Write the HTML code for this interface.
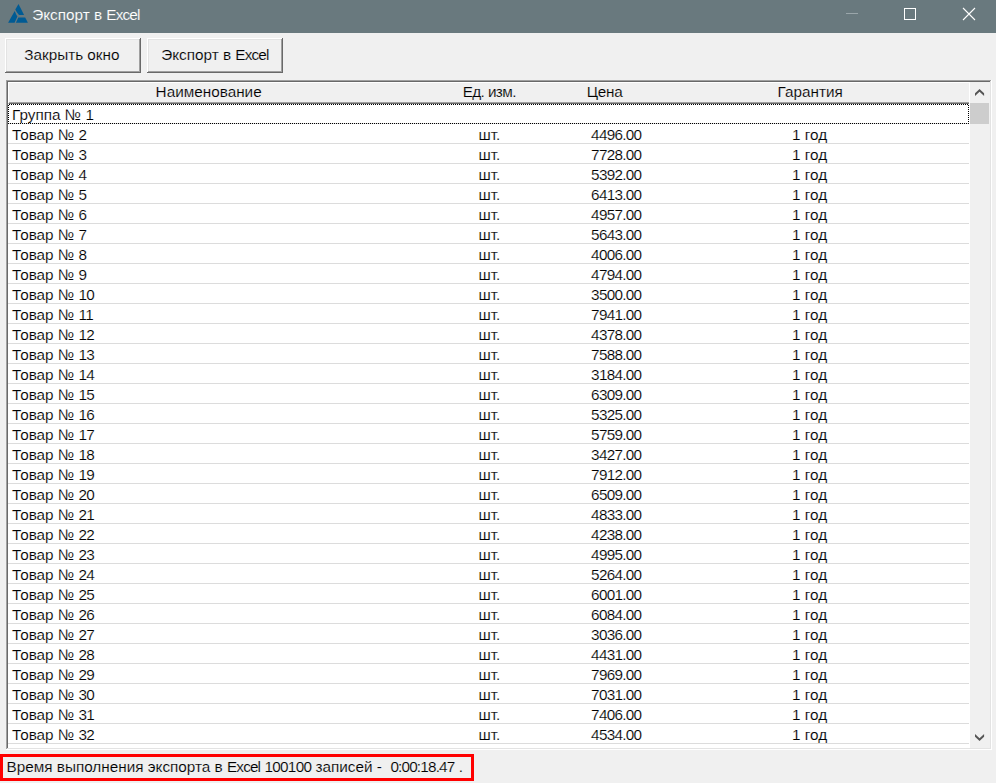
<!DOCTYPE html>
<html lang="ru"><head><meta charset="utf-8"><title>Экспорт в Excel</title>
<style>
html,body{margin:0;padding:0;}
body{width:996px;height:783px;background:#f0f0f0;position:relative;overflow:hidden;font-family:"Liberation Sans",sans-serif;font-size:15.3px;color:#000;-webkit-text-stroke:0.15px #f0f0f0;}
.row{-webkit-text-stroke:0.15px #fff;}
#ttext{-webkit-text-stroke:0.12px #69797e;}
.abs{position:absolute;}
#title{left:0;top:0;width:996px;height:33px;background:#69797e;}
#ttext{left:32.2px;top:5px;color:#fff;line-height:20px;white-space:nowrap;}
.lat{letter-spacing:-0.85px;}
.dg{letter-spacing:-0.72px;}
.btn{top:38px;height:35px;width:136px;background:#696969;}
.btn i{position:absolute;display:block;}
.btn .l1{left:0;top:0;right:1px;bottom:1px;background:#fff;}
.btn .l2{left:1px;top:1px;right:1px;bottom:1px;background:#a0a0a0;}
.btn .l3{left:1px;top:1px;right:2px;bottom:2px;background:#e3e3e3;}
.btn .l4{left:2px;top:2px;right:2px;bottom:2px;background:#f0f0f0;}
.btn span{position:absolute;top:7px;line-height:20px;white-space:nowrap;}
#grid{left:6px;top:80px;width:986px;height:670px;background:#fff;}
#grid i{position:absolute;display:block;}
#grid .l1{left:0;top:0;right:1px;bottom:1px;background:#a0a0a0;}
#grid .l2{left:1px;top:1px;right:1px;bottom:1px;background:#e3e3e3;}
#grid .l3{left:1px;top:1px;right:2px;bottom:2px;background:#696969;}
#grid .l4{left:2px;top:2px;right:2px;bottom:2px;background:#fff;}
#hdr{left:8px;top:82px;width:961px;height:22px;background:#f0f0f0;box-sizing:border-box;border-top:1px solid #fff;border-left:1px solid #fff;border-bottom:1px solid #696969;}
#hdr i{position:absolute;left:0;right:0;bottom:0;height:1px;background:#a0a0a0;}
.h{top:82px;line-height:20px;white-space:nowrap;}
.row{left:8px;width:961px;height:19px;border-bottom:1px solid #dcdcdc;}
.c{position:absolute;top:1px;line-height:20px;white-space:nowrap;}
.c1{left:4px;}
.c2{left:470.4px;}
.c3{left:583.1px;letter-spacing:-0.72px;}
.c4{left:784.1px;}
#sb{left:970px;top:82px;width:20px;height:666px;background:#f0f0f0;}
#thumb{left:970px;top:103px;width:19px;height:21px;background:#cdcdcd;}
#status{left:0;top:754px;width:474px;height:27px;box-sizing:border-box;border:3px solid #ff0000;}
#stext{left:6.5px;top:757px;line-height:20px;white-space:nowrap;}
</style></head>
<body>
<div id="title" class="abs"></div>
<svg class="abs" style="left:0;top:0" width="40" height="30" viewBox="0 0 40 30"><g fill="#005b94"><path d="M18.5 4.1 L24.1 15 L19 15 Q16.6 12.6 15.3 9.6 Z"/><path d="M14.7 11.1 Q15.9 14.2 17.4 16.6 L14.6 22.8 L8.1 22.8 Z"/><path d="M18.3 17.5 L25.2 17.5 L27.9 22.8 L15.9 22.8 Z"/></g></svg>
<div id="ttext" class="abs">Экспорт в <span class="lat">Excel</span></div>
<svg class="abs" style="left:840px;top:0" width="156" height="32" viewBox="0 0 156 32"><path d="M6 13.5H18" stroke="#9aa6aa" stroke-width="1" fill="none"/><rect x="64.5" y="8.5" width="11" height="11" stroke="#fff" stroke-width="1" fill="none"/><path d="M123 8L135 20M135 8L123 20" stroke="#fff" stroke-width="1.1" fill="none"/></svg>
<div class="abs btn" style="left:5px"><i class="l1"></i><i class="l2"></i><i class="l3"></i><i class="l4"></i><span style="left:19.2px">Закрыть окно</span></div>
<div class="abs btn" style="left:147px"><i class="l1"></i><i class="l2"></i><i class="l3"></i><i class="l4"></i><span style="left:14.2px">Экспорт в <span class="lat" style="position:static">Excel</span></span></div>
<div id="grid" class="abs"><i class="l1"></i><i class="l2"></i><i class="l3"></i><i class="l4"></i></div>
<div id="hdr" class="abs"><i></i></div>
<div class="abs h" style="left:155.6px">Наименование</div>
<div class="abs h" style="left:462.7px;letter-spacing:-0.6px">Ед. изм.</div>
<div class="abs h" style="left:586.8px;letter-spacing:-0.3px">Цена</div>
<div class="abs h" style="left:777.5px">Гарантия</div>
<div class="abs row" style="top:104px"><span class="c c1">Группа № 1</span></div>
<div class="abs row" style="top:124px"><span class="c c1">Товар № 2</span><span class="c c2">шт.</span><span class="c c3">4496.00</span><span class="c c4">1 год</span></div>
<div class="abs row" style="top:144px"><span class="c c1">Товар № 3</span><span class="c c2">шт.</span><span class="c c3">7728.00</span><span class="c c4">1 год</span></div>
<div class="abs row" style="top:164px"><span class="c c1">Товар № 4</span><span class="c c2">шт.</span><span class="c c3">5392.00</span><span class="c c4">1 год</span></div>
<div class="abs row" style="top:184px"><span class="c c1">Товар № 5</span><span class="c c2">шт.</span><span class="c c3">6413.00</span><span class="c c4">1 год</span></div>
<div class="abs row" style="top:204px"><span class="c c1">Товар № 6</span><span class="c c2">шт.</span><span class="c c3">4957.00</span><span class="c c4">1 год</span></div>
<div class="abs row" style="top:224px"><span class="c c1">Товар № 7</span><span class="c c2">шт.</span><span class="c c3">5643.00</span><span class="c c4">1 год</span></div>
<div class="abs row" style="top:244px"><span class="c c1">Товар № 8</span><span class="c c2">шт.</span><span class="c c3">4006.00</span><span class="c c4">1 год</span></div>
<div class="abs row" style="top:264px"><span class="c c1">Товар № 9</span><span class="c c2">шт.</span><span class="c c3">4794.00</span><span class="c c4">1 год</span></div>
<div class="abs row" style="top:284px"><span class="c c1">Товар № <span class="dg">10</span></span><span class="c c2">шт.</span><span class="c c3">3500.00</span><span class="c c4">1 год</span></div>
<div class="abs row" style="top:304px"><span class="c c1">Товар № <span class="dg">11</span></span><span class="c c2">шт.</span><span class="c c3">7941.00</span><span class="c c4">1 год</span></div>
<div class="abs row" style="top:324px"><span class="c c1">Товар № <span class="dg">12</span></span><span class="c c2">шт.</span><span class="c c3">4378.00</span><span class="c c4">1 год</span></div>
<div class="abs row" style="top:344px"><span class="c c1">Товар № <span class="dg">13</span></span><span class="c c2">шт.</span><span class="c c3">7588.00</span><span class="c c4">1 год</span></div>
<div class="abs row" style="top:364px"><span class="c c1">Товар № <span class="dg">14</span></span><span class="c c2">шт.</span><span class="c c3">3184.00</span><span class="c c4">1 год</span></div>
<div class="abs row" style="top:384px"><span class="c c1">Товар № <span class="dg">15</span></span><span class="c c2">шт.</span><span class="c c3">6309.00</span><span class="c c4">1 год</span></div>
<div class="abs row" style="top:404px"><span class="c c1">Товар № <span class="dg">16</span></span><span class="c c2">шт.</span><span class="c c3">5325.00</span><span class="c c4">1 год</span></div>
<div class="abs row" style="top:424px"><span class="c c1">Товар № <span class="dg">17</span></span><span class="c c2">шт.</span><span class="c c3">5759.00</span><span class="c c4">1 год</span></div>
<div class="abs row" style="top:444px"><span class="c c1">Товар № <span class="dg">18</span></span><span class="c c2">шт.</span><span class="c c3">3427.00</span><span class="c c4">1 год</span></div>
<div class="abs row" style="top:464px"><span class="c c1">Товар № <span class="dg">19</span></span><span class="c c2">шт.</span><span class="c c3">7912.00</span><span class="c c4">1 год</span></div>
<div class="abs row" style="top:484px"><span class="c c1">Товар № <span class="dg">20</span></span><span class="c c2">шт.</span><span class="c c3">6509.00</span><span class="c c4">1 год</span></div>
<div class="abs row" style="top:504px"><span class="c c1">Товар № <span class="dg">21</span></span><span class="c c2">шт.</span><span class="c c3">4833.00</span><span class="c c4">1 год</span></div>
<div class="abs row" style="top:524px"><span class="c c1">Товар № <span class="dg">22</span></span><span class="c c2">шт.</span><span class="c c3">4238.00</span><span class="c c4">1 год</span></div>
<div class="abs row" style="top:544px"><span class="c c1">Товар № <span class="dg">23</span></span><span class="c c2">шт.</span><span class="c c3">4995.00</span><span class="c c4">1 год</span></div>
<div class="abs row" style="top:564px"><span class="c c1">Товар № <span class="dg">24</span></span><span class="c c2">шт.</span><span class="c c3">5264.00</span><span class="c c4">1 год</span></div>
<div class="abs row" style="top:584px"><span class="c c1">Товар № <span class="dg">25</span></span><span class="c c2">шт.</span><span class="c c3">6001.00</span><span class="c c4">1 год</span></div>
<div class="abs row" style="top:604px"><span class="c c1">Товар № <span class="dg">26</span></span><span class="c c2">шт.</span><span class="c c3">6084.00</span><span class="c c4">1 год</span></div>
<div class="abs row" style="top:624px"><span class="c c1">Товар № <span class="dg">27</span></span><span class="c c2">шт.</span><span class="c c3">3036.00</span><span class="c c4">1 год</span></div>
<div class="abs row" style="top:644px"><span class="c c1">Товар № <span class="dg">28</span></span><span class="c c2">шт.</span><span class="c c3">4431.00</span><span class="c c4">1 год</span></div>
<div class="abs row" style="top:664px"><span class="c c1">Товар № <span class="dg">29</span></span><span class="c c2">шт.</span><span class="c c3">7969.00</span><span class="c c4">1 год</span></div>
<div class="abs row" style="top:684px"><span class="c c1">Товар № <span class="dg">30</span></span><span class="c c2">шт.</span><span class="c c3">7031.00</span><span class="c c4">1 год</span></div>
<div class="abs row" style="top:704px"><span class="c c1">Товар № <span class="dg">31</span></span><span class="c c2">шт.</span><span class="c c3">7406.00</span><span class="c c4">1 год</span></div>
<div class="abs row" style="top:724px"><span class="c c1">Товар № <span class="dg">32</span></span><span class="c c2">шт.</span><span class="c c3">4534.00</span><span class="c c4">1 год</span></div>
<svg class="abs" style="left:8px;top:104px" width="961" height="20" viewBox="0 0 961 20" shape-rendering="crispEdges"><defs><pattern id="chk" width="2" height="2" patternUnits="userSpaceOnUse"><rect x="1" y="0" width="1" height="1" fill="#000"/><rect x="0" y="1" width="1" height="1" fill="#000"/></pattern></defs><rect x="0" y="0" width="961" height="1" fill="url(#chk)"/><rect x="0" y="19" width="961" height="1" fill="url(#chk)"/><rect x="0" y="0" width="1" height="20" fill="url(#chk)"/><rect x="960" y="0" width="1" height="20" fill="url(#chk)"/></svg>
<div id="sb" class="abs"></div><div id="thumb" class="abs"></div>
<svg class="abs" style="left:970px;top:82px" width="20" height="21" viewBox="0 0 20 21"><path d="M5 11.2L9.55 6.9L14.1 11.2L14.1 14L9.55 9.8L5 14Z" fill="#555"/></svg>
<svg class="abs" style="left:970px;top:727px" width="20" height="21" viewBox="0 0 20 21"><path d="M5 9.8L9.55 14.1L14.1 9.8L14.1 7L9.55 11.2L5 7Z" fill="#555"/></svg>
<div id="status" class="abs"></div>
<div id="stext" class="abs">Время выполнения экспорта в <span class="lat">Excel</span> <span style="letter-spacing:-0.7px">100100</span> записей - &nbsp;<span style="letter-spacing:-0.83px">0:00:18.47</span> .</div>
</body></html>
